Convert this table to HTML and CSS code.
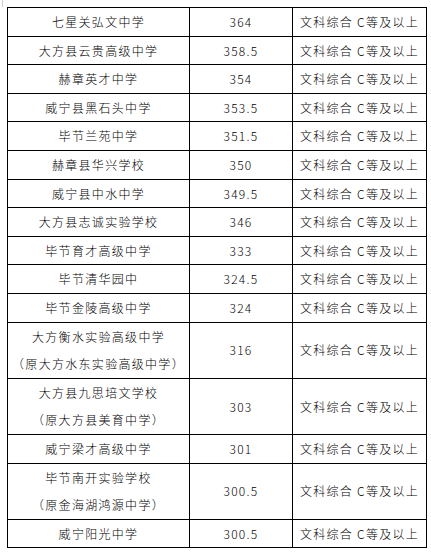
FILE: index.html
```html
<!DOCTYPE html>
<html lang="zh-CN">
<head>
<meta charset="utf-8">
<title>录取分数</title>
<link rel="stylesheet" href="styles.css">
</head>
<body>
<div class="corner"></div>
<table class="score">
  <colgroup>
    <col class="c-name">
    <col class="c-score">
    <col class="c-req">
  </colgroup>
  <tbody>
    <tr><td>七星关弘文中学</td><td>364</td><td>文科综合 C等及以上</td></tr>
    <tr><td>大方县云贵高级中学</td><td>358.5</td><td>文科综合 C等及以上</td></tr>
    <tr><td>赫章英才中学</td><td>354</td><td>文科综合 C等及以上</td></tr>
    <tr><td>威宁县黑石头中学</td><td>353.5</td><td>文科综合 C等及以上</td></tr>
    <tr><td>毕节兰苑中学</td><td>351.5</td><td>文科综合 C等及以上</td></tr>
    <tr><td>赫章县华兴学校</td><td>350</td><td>文科综合 C等及以上</td></tr>
    <tr><td>威宁县中水中学</td><td>349.5</td><td>文科综合 C等及以上</td></tr>
    <tr><td>大方县志诚实验学校</td><td>346</td><td>文科综合 C等及以上</td></tr>
    <tr><td>毕节育才高级中学</td><td>333</td><td>文科综合 C等及以上</td></tr>
    <tr><td>毕节清华园中</td><td>324.5</td><td>文科综合 C等及以上</td></tr>
    <tr><td>毕节金陵高级中学</td><td>324</td><td>文科综合 C等及以上</td></tr>
    <tr><td>大方衡水实验高级中学<br>（原大方水东实验高级中学）</td><td>316</td><td>文科综合 C等及以上</td></tr>
    <tr><td>大方县九思培文学校<br>（原大方县美育中学）</td><td>303</td><td>文科综合 C等及以上</td></tr>
    <tr><td>威宁梁才高级中学</td><td>301</td><td>文科综合 C等及以上</td></tr>
    <tr><td>毕节南开实验学校<br>（原金海湖鸿源中学）</td><td>300.5</td><td>文科综合 C等及以上</td></tr>
    <tr><td>威宁阳光中学</td><td>300.5</td><td>文科综合 C等及以上</td></tr>
  </tbody>
</table>
</body>
</html>
```

FILE: styles.css
```css
html, body {
  margin: 0;
  padding: 0;
  background: #ffffff;
}

body {
  font-family: "Noto Sans CJK SC", "Noto Sans", sans-serif;
  color: #000000;
}

.corner {
  width: 1px;
  height: 7px;
  margin-left: 2px;
  background: #cfcfcf;
}

.score {
  margin-left: 7px;
  border-collapse: collapse;
  table-layout: fixed;
  width: 419px;
}

.c-name { width: 182px; }
.c-score { width: 103px; }
.c-req { width: 134px; }

.score td {
  border: 1px solid #000000;
  padding: 0;
  text-align: center;
  vertical-align: middle;
  font-size: 12px;
  font-weight: 300;
  line-height: 27.6px;
  letter-spacing: 1.3px;
  white-space: nowrap;
}
```
